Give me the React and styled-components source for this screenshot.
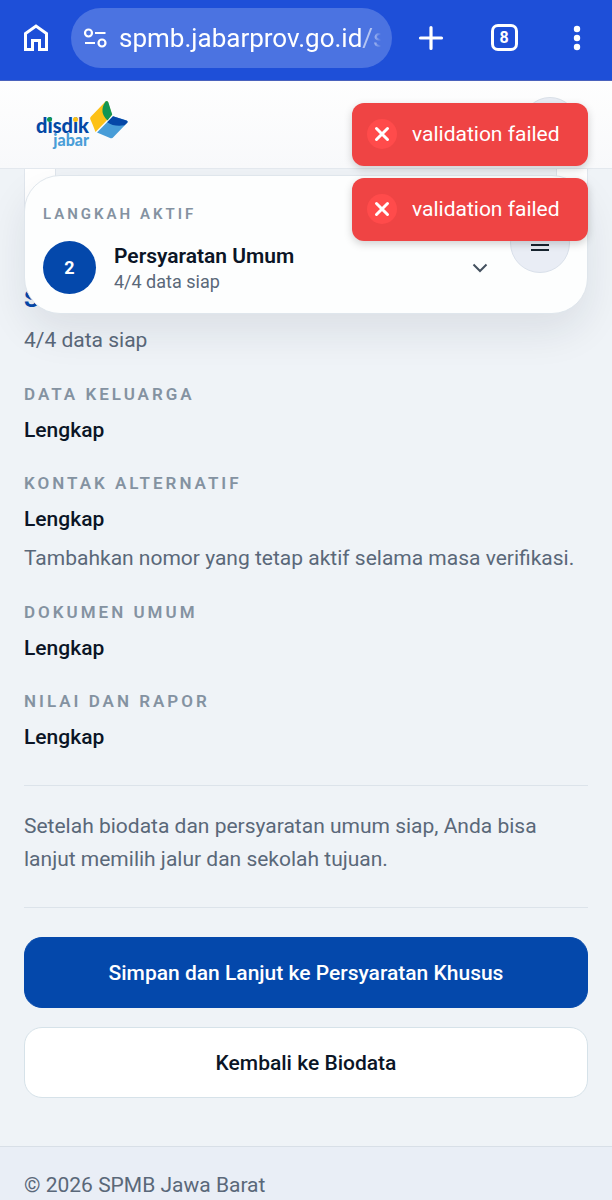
import React from "react";
import styled, { createGlobalStyle, css } from "styled-components";

const Global = createGlobalStyle`
  *, *::before, *::after { box-sizing: border-box; }
  body { margin: 0; background: #eff3f7; font-family: Roboto, "Noto Sans", sans-serif; color: #0b1526; }
  h1, h2, p, dl, dt, dd { margin: 0; }
  button { font-family: inherit; cursor: pointer; }
`;

const BrowserBar = styled.div`
  display: flex;
  align-items: center;
  height: 81px;
  padding: 0 21px 5px 22px;
  background: #1e4fd8;
  border-bottom: 1px solid #4a62bd;
  color: #fff;
`;
const BarButton = styled.button`
  display: grid;
  place-items: center;
  flex: none;
  width: 28px;
  height: 32px;
  padding: 0;
  border: 0;
  background: none;
  color: inherit;
`;
const BarActions = styled.div`
  display: flex;
  gap: 45px;
  margin-left: 25px;
`;
const AddressBox = styled.div`
  display: flex;
  align-items: center;
  gap: 12px;
  flex: 1;
  min-width: 0;
  height: 60px;
  margin-left: 21px;
  padding: 0 11px 0 12px;
  border-radius: 30px;
  background: #4b73e1;
`;
const AddressText = styled.a`
  flex: 1;
  min-width: 0;
  overflow: hidden;
  white-space: nowrap;
  font-size: 26px;
  line-height: 36px;
  color: #fff;
  text-decoration: none;
  mask-image: linear-gradient(to right, #000 calc(100% - 8px), transparent);
  span { color: #b4c5f3; }
`;

const SiteHeader = styled.header`
  position: relative;
  z-index: 2;
  display: flex;
  align-items: center;
  justify-content: space-between;
  height: 88px;
  padding: 0 34px 0 32px;
  background: linear-gradient(#fefefe, #f8f9fb);
  border-bottom: 1px solid #e3e8ee;
`;
const AccountButton = styled.button`
  width: 56px;
  height: 56px;
  border: 1px solid #d9e0e8;
  border-radius: 50%;
  background: #e9edf5;
`;

const Main = styled.main`
  position: relative;
  padding: 0 24px 48px;
`;
const PreviousPanel = styled.div`
  height: 56px;
  padding: 0 30px;
  background: #fff;
  border: 1px solid #e0e6ed;
  border-top: 0;
`;
const PreviousField = styled.div`
  height: 20px;
  background: #eff3f7;
  border: 1px solid #dfe5ec;
  border-top: 0;
`;
const StepCard = styled.section`
  position: absolute;
  top: 6px;
  left: 24px;
  right: 24px;
  z-index: 1;
  padding: 26px 18px 19px;
  border: 1px solid #dfe6ec;
  border-radius: 36px;
  background: #fdfefe;
  box-shadow: 0 18px 40px rgba(20, 35, 55, 0.09);
`;
const labelText = css`
  font-size: 17px;
  line-height: 24px;
  font-weight: 600;
  letter-spacing: 3px;
  text-transform: uppercase;
  color: #8492a1;
`;
const StepLabel = styled.h2`
  ${labelText}
  font-size: 15px;
`;
const StepRow = styled.div`
  display: flex;
  align-items: center;
  gap: 18px;
  margin-top: 15px;
`;
const StepNumber = styled.span`
  display: grid;
  place-items: center;
  width: 53px;
  height: 53px;
  border-radius: 50%;
  background: #0448ab;
  color: #fff;
  font-size: 18px;
  font-weight: 700;
`;
const StepText = styled.div`
  flex: 1;
  strong { display: block; font-size: 21px; line-height: 28px; font-weight: 600; }
  span { display: block; font-size: 18px; line-height: 24px; color: #5a6879; }
`;
const ChevronButton = styled.button`
  display: grid;
  place-items: center;
  width: 24px;
  height: 24px;
  margin-right: 77px;
  padding: 0;
  border: 0;
  background: none;
`;
const MenuButton = styled.button`
  position: absolute;
  right: 17px;
  top: 37px;
  display: grid;
  place-items: center;
  width: 60px;
  height: 60px;
  padding: 0;
  border: 1px solid #d9e0ea;
  border-radius: 50%;
  background: #e9edf5;
`;

const Summary = styled.section`
  padding: 56px 0 32px;
  border-bottom: 1px solid #dce3ea;
`;
const SummaryTitle = styled.h1`
  margin-bottom: 7px;
  font-size: 24px;
  line-height: 36px;
  font-weight: 700;
  color: #0448ab;
`;
const bodyText = css`
  font-size: 21px;
  line-height: 33px;
  color: #5a6879;
`;
const Body = styled.p`
  ${bodyText}
`;
const StatusList = styled.dl`
  display: flex;
  flex-direction: column;
  gap: 25px;
  margin-top: 25px;
`;
const StatusTerm = styled.dt`
  ${labelText}
`;
const StatusValue = styled.dd`
  margin-top: 8px;
  font-size: 21px;
  line-height: 32px;
  font-weight: 500;
`;
const StatusHint = styled.dd`
  ${bodyText}
  margin-top: 7px;
`;
const NextNote = styled.section`
  padding: 24px 0 31px;
  border-bottom: 1px solid #dce3ea;
`;
const Actions = styled.div`
  display: flex;
  flex-direction: column;
  gap: 19px;
  margin-top: 29px;
`;
const ActionButton = styled.button`
  height: 71px;
  border: 1px solid ${(p) => (p.$primary ? "#0448ab" : "#d6e2e9")};
  border-radius: 18px;
  background: ${(p) => (p.$primary ? "#0448ab" : "#fff")};
  color: ${(p) => (p.$primary ? "#fff" : "#0b1526")};
  font-size: 21px;
  font-weight: 500;
`;
const Footer = styled.footer`
  padding: 22px 24px 0;
  border-top: 1px solid #d8dfe7;
  background: #e9eef6;
`;

const Toasts = styled.div`
  position: absolute;
  top: 103px;
  right: 24px;
  z-index: 5;
  display: flex;
  flex-direction: column;
  gap: 12px;
`;
const Toast = styled.div`
  display: flex;
  align-items: center;
  gap: 14px;
  width: 236px;
  height: 63px;
  padding: 0 14px 1px;
  border-radius: 12px;
  background: #ef4444;
  box-shadow: 0 3px 8px rgba(0, 0, 0, 0.18);
  color: #fff;
  font-size: 21px;
  white-space: nowrap;
`;

const HomeIcon = () => (
  <svg width="28" height="32" viewBox="0 0 28 32" fill="none" stroke="#fff" strokeWidth="3">
    <path d="M3.5 27.5V11.5L14 4L24.5 11.5V27.5H17.5V18.5H10.5V27.5Z" />
  </svg>
);
const TuneIcon = () => (
  <svg width="24" height="22" viewBox="0 0 24 22" fill="none" stroke="#fff" strokeWidth="2.2">
    <circle cx="5.5" cy="6" r="3.5" />
    <path d="M12 6H22.5M2 16H12" />
    <circle cx="19" cy="16" r="3.5" />
  </svg>
);
const PlusIcon = () => (
  <svg width="28" height="28" viewBox="0 0 28 28" stroke="#fff" strokeWidth="3.2" strokeLinecap="round">
    <path d="M14 3.5V24.5M3.5 14H24.5" />
  </svg>
);
const TabCount = styled.span`
  display: grid;
  place-items: center;
  width: 27px;
  height: 27px;
  border: 3px solid #fff;
  border-radius: 7px;
  font-size: 16px;
  line-height: 20px;
  font-weight: 700;
`;
const DotsIcon = () => (
  <svg width="8" height="26" viewBox="0 0 8 26" fill="#fff">
    <circle cx="4" cy="4" r="3.2" /><circle cx="4" cy="13" r="3.2" /><circle cx="4" cy="22" r="3.2" />
  </svg>
);
const ErrorIcon = () => (
  <svg width="32" height="32" viewBox="0 0 32 32">
    <circle cx="16" cy="16" r="15" fill="#ff4b4b" />
    <path d="M10.5 10.5L21.5 21.5M21.5 10.5L10.5 21.5" stroke="#fff" strokeWidth="3" strokeLinecap="round" />
  </svg>
);

const Brand = styled.a`
  display: flex;
  align-items: flex-start;
  padding: 0 4px 4px;
  text-decoration: none;
`;
const BrandWords = styled.span`
  display: flex;
  flex-direction: column;
  align-items: flex-end;
  padding-top: 17px;
  font-family: Lato, sans-serif;
  font-weight: 900;
`;
const BrandName = styled.span`
  font-size: 20px;
  line-height: 18px;
  color: #0448a5;
`;
const BrandRegion = styled.span`
  font-size: 16px;
  line-height: 12px;
  color: #4a9ed8;
`;
const DottedLetter = styled.span`
  position: relative;
  &::before {
    content: "";
    position: absolute;
    top: 4px;
    left: 0;
    width: 5px;
    height: 5px;
    border-radius: 50%;
    background: ${(p) => p.$dot};
  }
`;
const BrandMark = () => (
  <svg width="40" height="48" viewBox="88 98 40 48">
    <path d="M89.2 118Q88.8 116.5 90 115.5L104.5 100.5Q106 99.5 107 101L111 114L94.5 131Q92 124 89.2 118Z" fill="#fdc116" />
    <path d="M104.5 100.5Q106.5 99 107.4 101.5L111.2 113.5L106.5 119.5Q97.5 111 104.5 100.5Z" fill="#129653" />
    <path d="M96 131.5L112 115.2L125.5 119.5Q127.5 120.5 126 122L112.5 136Q111.2 137.8 109 137Z" fill="#489dd8" />
    <path d="M106.2 121.2L112 115.2L125.5 119.5Q127.5 120.5 126 122L123.5 124.3Q113 126 106.2 121.2Z" fill="#0547a7" />
  </svg>
);

const statuses = [
  { term: "Data keluarga", value: "Lengkap" },
  { term: "Kontak alternatif", value: "Lengkap", hint: "Tambahkan nomor yang tetap aktif selama masa verifikasi." },
  { term: "Dokumen umum", value: "Lengkap" },
  { term: "Nilai dan rapor", value: "Lengkap" },
];

export default function App() {
  return (
    <>
      <Global />
      <BrowserBar>
        <BarButton aria-label="Beranda"><HomeIcon /></BarButton>
        <AddressBox>
          <TuneIcon />
          <AddressText href="#">spmb.jabarprov.go.id<span>/s</span></AddressText>
        </AddressBox>
        <BarActions>
          <BarButton aria-label="Tab baru"><PlusIcon /></BarButton>
          <BarButton><TabCount>8</TabCount></BarButton>
          <BarButton aria-label="Opsi"><DotsIcon /></BarButton>
        </BarActions>
      </BrowserBar>
      <SiteHeader>
        <Brand href="#">
          <BrandWords>
            <BrandName>d<DottedLetter $dot="#129653">i</DottedLetter>sd<DottedLetter $dot="#fdc116">i</DottedLetter>k</BrandName>
            <BrandRegion>jabar</BrandRegion>
          </BrandWords>
          <BrandMark />
        </Brand>
        <AccountButton aria-label="Akun" />
      </SiteHeader>
      <Main>
        <PreviousPanel><PreviousField /></PreviousPanel>
        <StepCard>
          <StepLabel>Langkah aktif</StepLabel>
          <StepRow>
            <StepNumber>2</StepNumber>
            <StepText><strong>Persyaratan Umum</strong><span>4/4 data siap</span></StepText>
            <ChevronButton aria-label="Buka langkah">
              <svg width="16" height="10" viewBox="0 0 16 10" fill="none" stroke="#44515f" strokeWidth="2"><path d="M1.5 1.5L8 8L14.5 1.5" /></svg>
            </ChevronButton>
          </StepRow>
          <MenuButton aria-label="Menu">
            <svg width="18" height="20" viewBox="0 0 18 20" stroke="#17242f" strokeWidth="2"><path d="M0 7H18M0 12H18M0 17H18" /></svg>
          </MenuButton>
        </StepCard>
        <Summary>
          <SummaryTitle>S</SummaryTitle>
          <Body>4/4 data siap</Body>
          <StatusList>
            {statuses.map((s) => (
              <div key={s.term}>
                <StatusTerm>{s.term}</StatusTerm>
                <StatusValue>{s.value}</StatusValue>
                {s.hint && <StatusHint>{s.hint}</StatusHint>}
              </div>
            ))}
          </StatusList>
        </Summary>
        <NextNote><Body>Setelah biodata dan persyaratan umum siap, Anda bisa lanjut memilih jalur dan sekolah tujuan.</Body></NextNote>
        <Actions>
          <ActionButton $primary>Simpan dan Lanjut ke Persyaratan Khusus</ActionButton>
          <ActionButton>Kembali ke Biodata</ActionButton>
        </Actions>
      </Main>
      <Footer><Body>© 2026 SPMB Jawa Barat</Body></Footer>
      <Toasts role="status">
        <Toast><ErrorIcon />validation failed</Toast>
        <Toast><ErrorIcon />validation failed</Toast>
      </Toasts>
    </>
  );
}
